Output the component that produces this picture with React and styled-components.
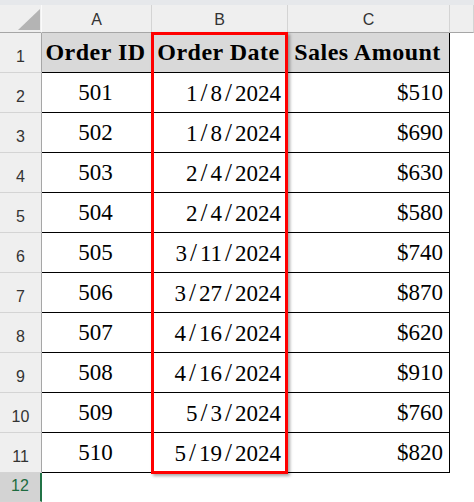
import React from "react";
import styled, { createGlobalStyle } from "styled-components";

const rows = [
  { id: "501", date: "1/8/2024", amount: "$510" },
  { id: "502", date: "1/8/2024", amount: "$690" },
  { id: "503", date: "2/4/2024", amount: "$630" },
  { id: "504", date: "2/4/2024", amount: "$580" },
  { id: "505", date: "3/11/2024", amount: "$740" },
  { id: "506", date: "3/27/2024", amount: "$870" },
  { id: "507", date: "4/16/2024", amount: "$620" },
  { id: "508", date: "4/16/2024", amount: "$910" },
  { id: "509", date: "5/3/2024", amount: "$760" },
  { id: "510", date: "5/19/2024", amount: "$820" },
];

const GlobalStyle = createGlobalStyle`
  html, body {
    margin: 0;
    background: #ffffff;
  }
  * {
    box-sizing: border-box;
  }
`;

const Sheet = styled.div`
  width: 474px;
  height: 502px;
  overflow: hidden;
  background: #ffffff;
`;

const TopStrip = styled.div`
  height: 5px;
  background: #e6e8eb;
`;

// table and highlight layer share one grid cell
const Stack = styled.div`
  display: grid;
  & > * {
    grid-area: 1 / 1;
  }
`;

const Grid = styled.div`
  display: grid;
  grid-template-columns: 42px 110px 136px 162px 1fr;
  grid-template-rows: 28px repeat(11, 40px) 29px;
`;

const Overlay = styled(Grid)`
  pointer-events: none;
  z-index: 2;
`;

const Corner = styled.div`
  background: #efefef;
  border-right: 1px solid #fbfbfb;
  border-bottom: 1px solid #a6a6a6;
  display: flex;
  justify-content: flex-end;
  align-items: flex-end;
  padding: 0 1px 2px 0;
`;

const Triangle = styled.span`
  width: 22px;
  height: 21px;
  background: #b4b4b4;
  clip-path: polygon(100% 0, 100% 100%, 0 100%);
`;

const ColHead = styled.div`
  background: #efefef;
  border-right: 1px solid #d4d4d4;
  border-bottom: 1px solid #a6a6a6;
  display: flex;
  justify-content: center;
  align-items: flex-end;
  padding-bottom: 3px;
  font-family: "Liberation Sans", Arial, sans-serif;
  font-size: 16px;
  color: #333333;
`;

const RowHead = styled.div`
  background: ${(p) => (p.$active ? "#d3d3d3" : "#efefef")};
  border-right: ${(p) => (p.$active ? "2px solid #217346" : "1px solid #a6a6a6")};
  border-bottom: 1px solid #d4d4d4;
  display: flex;
  justify-content: center;
  align-items: flex-end;
  padding-bottom: 6px;
  font-family: "Liberation Sans", Arial, sans-serif;
  font-size: 16px;
  color: ${(p) => (p.$active ? "#1d6b3f" : "#333333")};
`;

const Cell = styled.div`
  display: flex;
  align-items: center;
  justify-content: ${(p) => (p.$align === "center" ? "center" : "flex-end")};
  padding: 0 6px 0 4px;
  background: ${(p) => (p.$head ? "#d9d9d9" : "#ffffff")};
  border-right: 1px solid #000000;
  border-bottom: 1px solid #000000;
  font-family: "Liberation Serif", "Times New Roman", serif;
  font-size: ${(p) => (p.$head ? "24px" : "23px")};
  font-weight: ${(p) => (p.$head ? 700 : 400)};
  letter-spacing: ${(p) => (p.$head ? "0.5px" : "0")};
  color: #000000;
  white-space: nowrap;
`;

const Blank = styled.div`
  background: #ffffff;
`;

const Slash = styled.span`
  margin: 0 3px;
  font-size: 25px;
`;

const Highlight = styled.div`
  grid-column: 3;
  grid-row: 2 / 13;
  margin: -1px 0 -1px -1px;
  border: 3px solid #ff0000;
  box-shadow: 2px 2px 3px rgba(0, 0, 0, 0.35);
`;

const DateText = ({ value }) => {
  const parts = value.split("/");
  return (
    <span>
      {parts.map((part, i) => (
        <React.Fragment key={i}>
          {i > 0 && <Slash>/</Slash>}
          {part}
        </React.Fragment>
      ))}
    </span>
  );
};

export default function App() {
  return (
    <Sheet>
      <GlobalStyle />
      <TopStrip />
      <Stack>
        <Grid>
          <Corner>
            <Triangle />
          </Corner>
          <ColHead>A</ColHead>
          <ColHead>B</ColHead>
          <ColHead>C</ColHead>
          <ColHead />

          <RowHead>1</RowHead>
          <Cell $head $align="center">Order ID</Cell>
          <Cell $head $align="center">Order Date</Cell>
          <Cell $head $align="center">Sales Amount</Cell>
          <Blank />

          {rows.map((r, i) => (
            <React.Fragment key={r.id}>
              <RowHead>{i + 2}</RowHead>
              <Cell $align="center">{r.id}</Cell>
              <Cell>
                <DateText value={r.date} />
              </Cell>
              <Cell>{r.amount}</Cell>
              <Blank />
            </React.Fragment>
          ))}

          <RowHead $active>12</RowHead>
          <Blank />
          <Blank />
          <Blank />
          <Blank />
        </Grid>
        <Overlay>
          <Highlight />
        </Overlay>
      </Stack>
    </Sheet>
  );
}
